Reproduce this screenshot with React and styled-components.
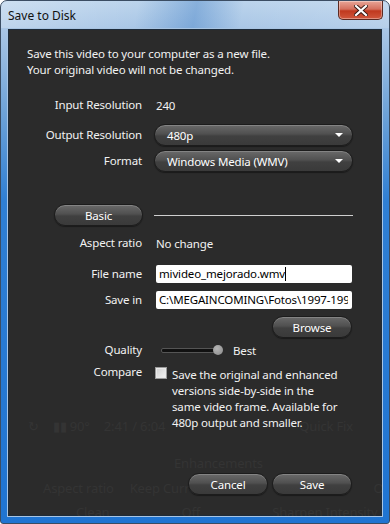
import styled, { createGlobalStyle } from 'styled-components';

const GlobalStyle = createGlobalStyle`
  html, body {
    margin: 0;
    padding: 0;
    background: #ffffff;
  }
  body {
    font-family: 'Noto Sans', 'Open Sans', sans-serif;
    font-size: 11.5px;
    letter-spacing: -0.15px;
  }
`;

const Window = styled.div`
  width: 390px;
  height: 524px;
  box-sizing: border-box;
  border: 1px solid #3b4d63;
  border-radius: 7px 7px 3px 3px;
  background: linear-gradient(
    to bottom,
    #bcd4ec 0px,
    #a9c6e6 28px,
    #6fa3d8 110px,
    #2f7fd4 200px,
    #1f74d2 524px
  );
  display: flex;
  flex-direction: column;
  overflow: hidden;
`;

const TitleBar = styled.div`
  height: 27px;
  flex: 0 0 auto;
  display: flex;
  align-items: flex-start;
  justify-content: space-between;
  padding-left: 7px;
  background: linear-gradient(
    100deg,
    rgba(255, 255, 255, 0.25) 0%,
    rgba(255, 255, 255, 0) 35%,
    rgba(40, 110, 190, 0.35) 50%,
    rgba(255, 255, 255, 0) 62%,
    rgba(255, 255, 255, 0.15) 100%
  );
`;

const Title = styled.div`
  font-size: 12px;
  letter-spacing: 0;
  color: #111;
  margin-top: 6px;
`;

const CloseButton = styled.div`
  width: 45px;
  height: 19px;
  margin-right: 6px;
  box-sizing: border-box;
  border: 1px solid #5b2a22;
  border-top: none;
  border-radius: 0 0 5px 5px;
  background: linear-gradient(to bottom, #e8a597 0%, #d4705e 45%, #c0391f 55%, #d0573c 100%);
  box-shadow: inset 0 0 0 1px rgba(255, 255, 255, 0.35);
  display: flex;
  align-items: center;
  justify-content: center;
`;

const Content = styled.div`
  flex: 1 1 auto;
  margin: 0 6px 6px 6px;
  border: 1px solid #a8c4e2;
  background: #2b2b2b;
  display: grid;
  grid-template-columns: minmax(0, 1fr);
  grid-template-rows: minmax(0, 1fr);
  overflow: hidden;
  box-shadow: inset 0 0 0 1px #1d2b3a;
`;

const Layer = styled.div`
  grid-area: 1 / 1;
  display: flex;
  flex-direction: column;
  min-height: 0;
  min-width: 0;
  overflow: hidden;
`;

const GhostRow = styled.div`
  display: flex;
  align-items: center;
  gap: ${(p) => p.gap || 14}px;
  margin-top: ${(p) => p.top}px;
  padding-left: ${(p) => p.left}px;
  height: 18px;
  font-size: 13px;
  color: #343434;
  white-space: nowrap;
`;

const GhostBand = styled.div`
  margin-top: ${(p) => p.top}px;
  height: 1px;
  background: #313131;
`;

const Intro = styled.div`
  margin-top: 17px;
  padding-left: 19px;
  line-height: 16px;
  color: #f2f2f2;
`;

const Row = styled.div`
  display: flex;
  align-items: ${(p) => (p.top ? 'flex-start' : 'center')};
  min-height: 22px;
  margin-top: ${(p) => p.gap}px;
`;

const Label = styled.div`
  width: 134px;
  flex: 0 0 134px;
  text-align: right;
  line-height: 16px;
  color: #f2f2f2;
  margin-top: ${(p) => p.shift || 0}px;
`;

const LabelCell = styled.div`
  width: 135px;
  flex: 0 0 135px;
  display: flex;
  justify-content: flex-end;
`;

const Value = styled.div`
  margin-left: 14px;
  color: #f2f2f2;
`;

const Field = styled.div`
  margin-left: 12px;
  width: 199px;
  display: flex;
  align-items: center;
`;

const Pill = styled.div`
  height: 22px;
  box-sizing: border-box;
  width: ${(p) => (p.width ? `${p.width}px` : '100%')};
  flex: 0 0 auto;
  border-radius: 11px;
  border: 1px solid #1c1c1c;
  background: linear-gradient(to bottom, #6a6a6a 0%, #505050 45%, #404040 55%, #3a3a3a 100%);
  box-shadow: inset 0 1px 0 rgba(255, 255, 255, 0.18), 0 1px 1px rgba(0, 0, 0, 0.4);
  display: flex;
  align-items: center;
  justify-content: ${(p) => (p.left ? 'space-between' : 'center')};
  padding: ${(p) => (p.left ? '0 9px 0 12px' : '0')};
  color: #ffffff;
`;

const Arrow = styled.div`
  width: 0;
  height: 0;
  border-left: 4px solid transparent;
  border-right: 4px solid transparent;
  border-top: 4px solid #ffffff;
`;

const Divider = styled.div`
  margin-left: 11px;
  width: 199px;
  height: 1px;
  background: #cfcfcf;
`;

const TextBox = styled.div`
  margin-left: 14px;
  width: 196px;
  height: 18px;
  box-sizing: border-box;
  background: #ffffff;
  border-radius: 2px;
  padding: 0 4px 0 3px;
  line-height: 18px;
  color: #000;
  white-space: nowrap;
  overflow: hidden;
`;

const Clip = styled.div`
  overflow: hidden;
`;

const Caret = styled.span`
  display: inline-block;
  width: 1px;
  height: 14px;
  background: #000;
  vertical-align: -3px;
`;

const RightAlign = styled.div`
  display: flex;
  justify-content: flex-end;
  padding-right: 30px;
  gap: 4px;
  margin-top: ${(p) => p.gap}px;
`;

const Slider = styled.div`
  margin-left: 19px;
  width: 62px;
  display: flex;
  align-items: center;
`;

const Track = styled.div`
  flex: 1;
  height: 3px;
  border-radius: 2px;
  background: #111;
  border: 1px solid #555;
`;

const Thumb = styled.div`
  width: 10px;
  height: 10px;
  margin-left: -6px;
  border-radius: 50%;
  background: radial-gradient(circle at 40% 35%, #b5b5b5, #8a8a8a);
`;

const SliderValue = styled.div`
  margin-left: 10px;
  color: #f2f2f2;
`;

const Check = styled.div`
  margin-left: 13px;
  margin-top: 2px;
  flex: 0 0 auto;
  width: 12px;
  height: 12px;
  box-sizing: border-box;
  border: 1px solid #9a9a9a;
  background: linear-gradient(135deg, #cfcfcf, #f4f4f4);
  box-shadow: inset 0 0 0 1px #e8e8e8;
`;

const CompareText = styled.div`
  margin-left: 5px;
  margin-top: 2px;
  width: 170px;
  line-height: 16px;
  color: #f2f2f2;
`;

const Footer = styled.div`
  display: flex;
  justify-content: flex-end;
  gap: 4px;
  padding-right: 30px;
  margin-top: 42px;
`;

function CloseGlyph() {
  return (
    <svg width="14" height="11" viewBox="0 0 14 11">
      <path
        d="M2 1 L12 10 M12 1 L2 10"
        stroke="#3a1a14"
        strokeWidth="4"
        strokeLinecap="square"
      />
      <path
        d="M2 1 L12 10 M12 1 L2 10"
        stroke="#ffffff"
        strokeWidth="2.2"
        strokeLinecap="square"
      />
    </svg>
  );
}

function Ghost() {
  return (
    <Layer>
      <GhostBand top={380} />
      <GhostRow top={8} left={20} gap={14}>
        <span>↻</span>
        <span>▮▮ 90°</span>
        <span>2:41 / 6:04</span>
        <span style={{ marginLeft: 120 }}>Quick Fix</span>
        <span style={{ marginLeft: 30 }}>▮▮ Co</span>
      </GhostRow>
      <GhostRow top={19} left={166}>
        <span>Enhancements</span>
      </GhostRow>
      <GhostRow top={7} left={35} gap={16}>
        <span>Aspect ratio</span>
        <span>Keep Current</span>
        <span style={{ marginLeft: 80 }}>Dehaze</span>
        <span style={{ marginLeft: 8 }}>OFF</span>
      </GhostRow>
      <GhostRow top={6} left={68} gap={72}>
        <span>Clean</span>
        <span>Off</span>
        <span>Sharpen Intensity</span>
      </GhostRow>
    </Layer>
  );
}

export default function App() {
  return (
    <>
      <GlobalStyle />
      <Window>
        <TitleBar>
          <Title>Save to Disk</Title>
          <CloseButton>
            <CloseGlyph />
          </CloseButton>
        </TitleBar>
        <Content>
          <Ghost />
          <Layer>
            <Intro>
              Save this video to your computer as a new file.
              <br />
              Your original video will not be changed.
            </Intro>

            <Row gap={16}>
              <Label>Input Resolution</Label>
              <Value>240</Value>
            </Row>

            <Row gap={8}>
              <Label>Output Resolution</Label>
              <Field>
                <Pill left>
                  <span>480p</span>
                  <Arrow />
                </Pill>
              </Field>
            </Row>

            <Row gap={4}>
              <Label>Format</Label>
              <Field>
                <Pill left>
                  <span>Windows Media (WMV)</span>
                  <Arrow />
                </Pill>
              </Field>
            </Row>

            <Row gap={32}>
              <LabelCell>
                <Pill width={89}>Basic</Pill>
              </LabelCell>
              <Divider />
            </Row>

            <Row gap={6}>
              <Label>Aspect ratio</Label>
              <Value>No change</Value>
            </Row>

            <Row gap={9}>
              <Label>File name</Label>
              <TextBox>
                mivideo_mejorado.wmv
                <Caret />
              </TextBox>
            </Row>

            <Row gap={4}>
              <Label>Save in</Label>
              <TextBox>
                <Clip>C:\MEGAINCOMING\Fotos\1997-1998</Clip>
              </TextBox>
            </Row>

            <RightAlign gap={5}>
              <Pill width={80}>Browse</Pill>
            </RightAlign>

            <Row gap={1}>
              <Label>Quality</Label>
              <Slider>
                <Track />
                <Thumb />
              </Slider>
              <SliderValue>Best</SliderValue>
            </Row>

            <Row gap={4} top>
              <Label shift={-1}>Compare</Label>
              <Check />
              <CompareText>
                Save the original and enhanced versions side-by-side in the same
                video frame. Available for 480p output and smaller.
              </CompareText>
            </Row>

            <Footer>
              <Pill width={80}>Cancel</Pill>
              <Pill width={80}>Save</Pill>
            </Footer>
          </Layer>
        </Content>
      </Window>
    </>
  );
}
